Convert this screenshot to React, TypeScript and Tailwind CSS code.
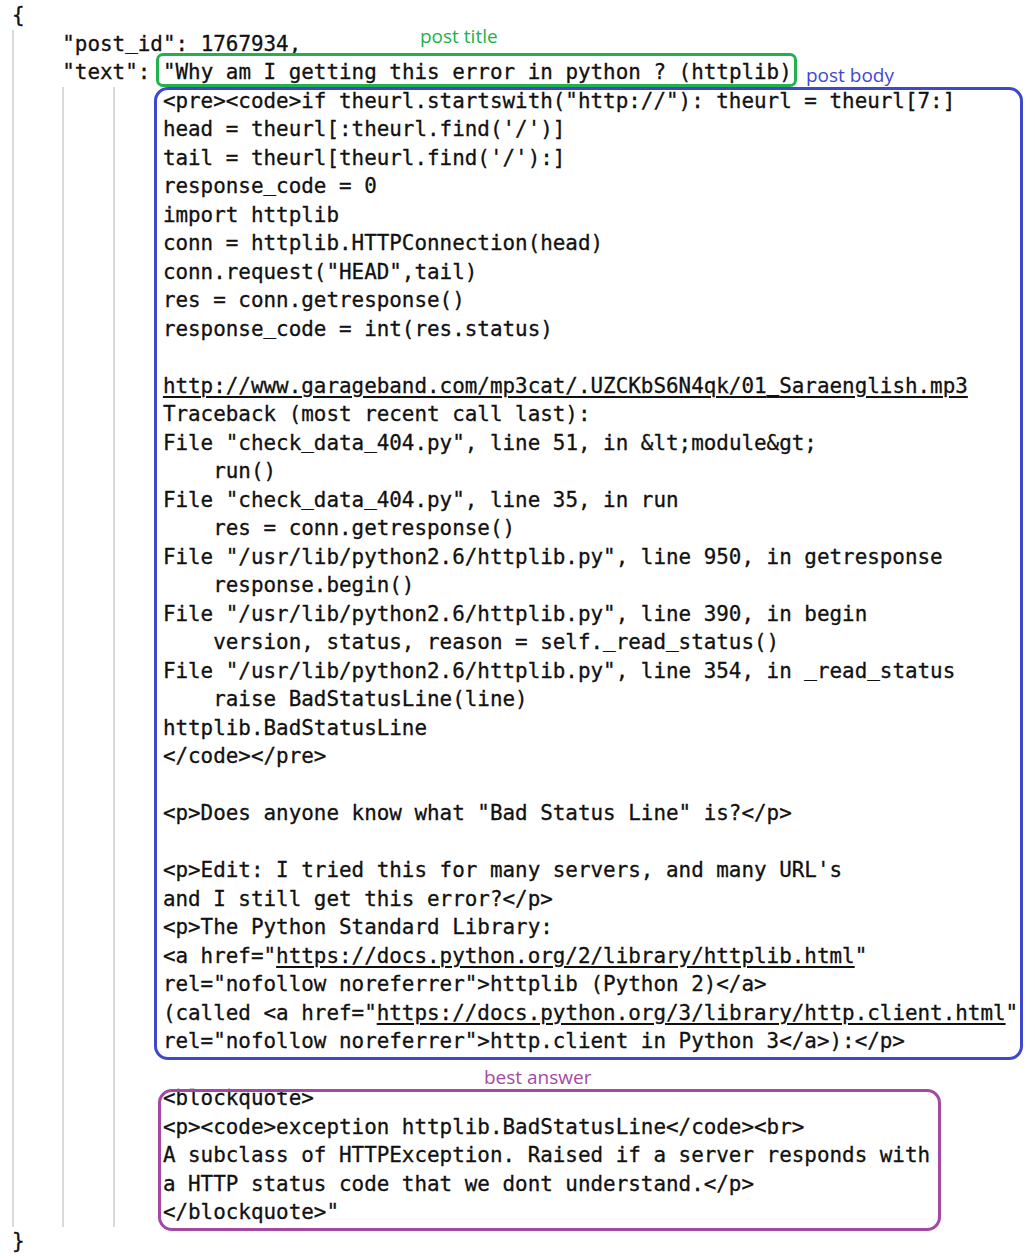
import { Fragment } from 'react';

type Part = string | { u: string };

interface Line {
  g: number;
  parts: Part[];
}

const L = (g: number, ...parts: Part[]): Line => ({ g, parts });

const lines: Line[] = [
  L(0, '{'),
  L(1, '"post_id": 1767934,'),
  L(1, '"text": "Why am I getting this error in python ? (httplib)'),
  L(3, '<pre><code>if theurl.startswith("http://"): theurl = theurl[7:]'),
  L(3, "head = theurl[:theurl.find('/')]"),
  L(3, "tail = theurl[theurl.find('/'):]"),
  L(3, 'response_code = 0'),
  L(3, 'import httplib'),
  L(3, 'conn = httplib.HTTPConnection(head)'),
  L(3, 'conn.request("HEAD",tail)'),
  L(3, 'res = conn.getresponse()'),
  L(3, 'response_code = int(res.status)'),
  L(3, ''),
  L(3, { u: 'http://www.garageband.com/mp3cat/.UZCKbS6N4qk/01_Saraenglish.mp3' }),
  L(3, 'Traceback (most recent call last):'),
  L(3, 'File "check_data_404.py", line 51, in &lt;module&gt;'),
  L(3, '    run()'),
  L(3, 'File "check_data_404.py", line 35, in run'),
  L(3, '    res = conn.getresponse()'),
  L(3, 'File "/usr/lib/python2.6/httplib.py", line 950, in getresponse'),
  L(3, '    response.begin()'),
  L(3, 'File "/usr/lib/python2.6/httplib.py", line 390, in begin'),
  L(3, '    version, status, reason = self._read_status()'),
  L(3, 'File "/usr/lib/python2.6/httplib.py", line 354, in _read_status'),
  L(3, '    raise BadStatusLine(line)'),
  L(3, 'httplib.BadStatusLine'),
  L(3, '</code></pre>'),
  L(3, ''),
  L(3, '<p>Does anyone know what "Bad Status Line" is?</p>'),
  L(3, ''),
  L(3, "<p>Edit: I tried this for many servers, and many URL's"),
  L(3, 'and I still get this error?</p>'),
  L(3, '<p>The Python Standard Library:'),
  L(3, '<a href="', { u: 'https://docs.python.org/2/library/httplib.html' }, '"'),
  L(3, 'rel="nofollow noreferrer">httplib (Python 2)</a>'),
  L(3, '(called <a href="', { u: 'https://docs.python.org/3/library/http.client.html' }, '"'),
  L(3, 'rel="nofollow noreferrer">http.client in Python 3</a>):</p>'),
  L(3, ''),
  L(3, '<blockquote>'),
  L(3, '<p><code>exception httplib.BadStatusLine</code><br>'),
  L(3, 'A subclass of HTTPException. Raised if a server responds with'),
  L(3, 'a HTTP status code that we dont understand.</p>'),
  L(3, '</blockquote>"'),
  L(0, '}'),
];

// underscores sit on the font's descent line and get lost; lift them a touch
function Text({ value }: { value: string }) {
  const bits = value.split('_');
  return (
    <>
      {bits.map((b, i) => (
        <Fragment key={i}>
          {i > 0 && <span className="relative top-[-2px]">_</span>}
          {b}
        </Fragment>
      ))}
    </>
  );
}

export default function App() {
  return (
    <div className="relative h-[1258px] w-[1035px] overflow-hidden bg-white">
      {/* JSON text, one row per line, indent guides as bordered columns */}
      <div className="pl-[12px] pt-[1px] font-['DejaVu_Sans_Mono',monospace] text-[20.9px] leading-[28.5px] text-[#111] [-webkit-text-stroke:0.3px_#111]">
        {lines.map((line, i) => (
          <div key={i} className="flex h-[28.5px]">
            {Array.from({ length: line.g }).map((_, j) => (
              <span key={j} className="w-[50.3px] shrink-0 border-l-2 border-[#dadada]" />
            ))}
            <div className="whitespace-pre">
              {line.parts.map((p, k) =>
                typeof p === 'string' ? (
                  <Text key={k} value={p} />
                ) : (
                  <span key={k} className="underline decoration-[1.5px] underline-offset-[3px]">
                    <Text value={p.u} />
                  </span>
                )
              )}
            </div>
          </div>
        ))}
      </div>

      {/* Annotation boxes drawn over the text */}
      <div className="absolute left-[156px] top-[53px] h-[34px] w-[641px] rounded-[7px] border-[3px] border-[#22b14c]" />
      <div className="absolute left-[154px] top-[87px] h-[973px] w-[869px] rounded-[14px] border-[3px] border-[#3f48cc]" />
      <div className="absolute left-[158px] top-[1089px] h-[142px] w-[783px] rounded-[14px] border-[3px] border-[#a349a4]" />

      <span className="absolute left-[420px] top-[27px] font-['Open_Sans',sans-serif] text-[19px] leading-[19px] text-[#22b14c]">
        post title
      </span>
      <span className="absolute left-[806px] top-[66px] font-['Open_Sans',sans-serif] text-[19px] leading-[19px] text-[#3f48cc]">
        post body
      </span>
      <span className="absolute left-[484px] top-[1068px] font-['Open_Sans',sans-serif] text-[19px] leading-[19px] text-[#a349a4]">
        best answer
      </span>
    </div>
  );
}
